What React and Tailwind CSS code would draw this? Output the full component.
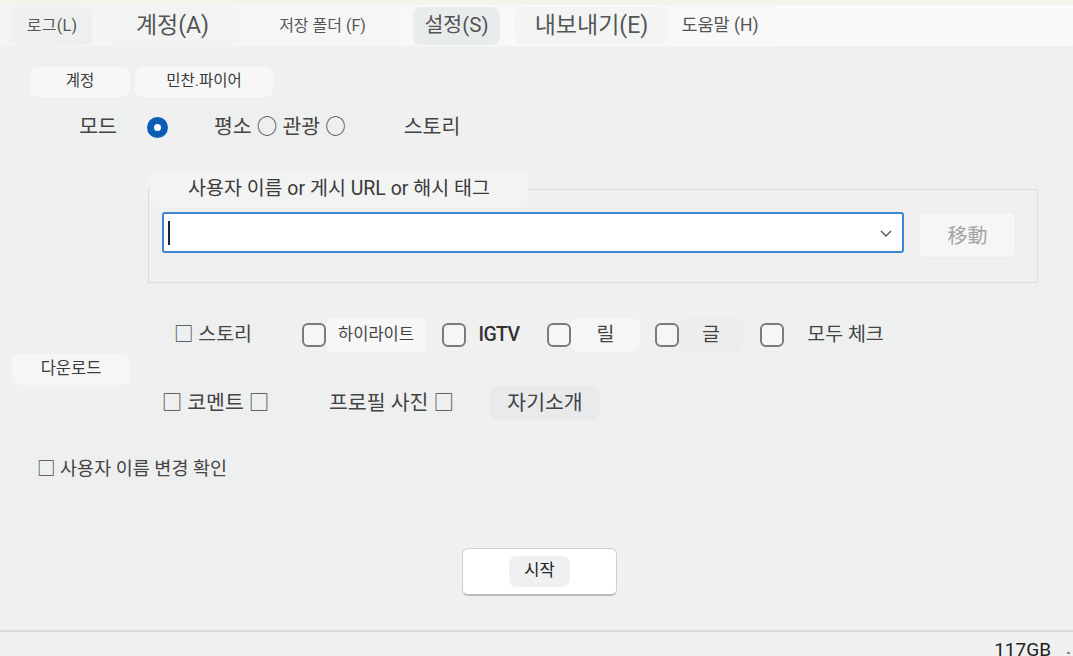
import React from 'react';

const font = { fontFamily: 'Roboto, "Noto Sans CJK KR", sans-serif' };

function Box({ className = '' }) {
  return <span className={`block w-[24px] h-[24px] shrink-0 border-2 border-[#7b7b7b] rounded-[6px] bg-[#f6f6f6] ${className}`} />;
}

export default function App() {
  return (
    <div className="w-[1073px] h-[656px] bg-[#f0f0f0] text-[#444] overflow-hidden flex flex-col" style={font}>
      {/* Menu bar */}
      <div className="h-[46px] shrink-0 bg-gradient-to-r from-[#f3f5f4] via-[#f8f9f8] to-[#fafafa] border-t-[5px] border-[#f4f4ea] flex items-center text-[#555] leading-none">
        <div className="ml-[12px] w-[80px] h-[38px] rounded-lg bg-[#eef0ef] flex items-center justify-center text-[16px] tracking-[0.3px]">로그(L)</div>
        <div className="ml-[13px] w-[135px] h-[38px] rounded-lg bg-[#f2f4f4] flex items-center justify-center text-[23px]">계정(A)</div>
        <div className="ml-[5px] w-[155px] h-[38px] rounded-lg bg-[#f5f7f7] flex items-center justify-center text-[16px]">저장 폴더 (F)</div>
        <div className="ml-[13px] w-[87px] h-[38px] rounded-lg bg-[#e9eced] flex items-center justify-center text-[20.5px]">설정(S)</div>
        <div className="ml-[15px] w-[153px] h-[38px] rounded-lg bg-[#f3f5f5] flex items-center justify-center text-[23px]">내보내기(E)</div>
        <div className="ml-[2px] w-[110px] h-[38px] rounded-lg bg-[#f8f8f8] flex items-center justify-center text-[17.5px] pr-[10px]">도움말 (H)</div>
      </div>

      {/* Account row */}
      <div className="mt-[21px] ml-[30px] flex gap-[5px] text-[15.5px] leading-none text-[#3a3a3a]">
        <div className="w-[100px] h-[30px] rounded-lg bg-[#f7f7f7] flex items-center justify-center">계정</div>
        <div className="w-[138px] h-[30px] rounded-lg bg-[#f7f7f7] flex items-center justify-center">민찬.파이어</div>
      </div>

      {/* Mode row */}
      <div className="mt-[13px] flex items-center h-[35px] text-[20.5px] leading-none">
        <div className="ml-[62px] w-[68px] h-[35px] rounded-lg bg-[#eeefef] flex items-center justify-center pl-[4px]">모드</div>
        <span className="ml-[17px] w-[21px] h-[21px] rounded-full bg-[#0b5cb5] flex items-center justify-center">
          <span className="w-[7px] h-[7px] rounded-full bg-white" />
        </span>
        <div className="ml-[28px] h-[35px] px-[18px] rounded-lg bg-[#eeefef] flex items-center">평소 ○ 관광 ○</div>
        <div className="ml-[40px]">스토리</div>
      </div>

      {/* Input group */}
      <fieldset className="mt-[25px] ml-[148px] w-[890px] border border-[#dcdcdc] pb-[24px] pl-[13px] pr-[21px]">
        <legend className="-ml-[12px] h-[38px] w-[378px] pl-[38px] rounded-lg bg-[#f2f3f3] text-[19.5px] text-[#3a3a3a] leading-none flex items-center">
          사용자 이름 or 게시 URL or 해시 태그
        </legend>
        <div className="mt-[4px] flex items-start gap-[15px]">
          <div className="w-[742px] h-[41px] bg-white border-2 border-[#3d86d4] rounded-[3px] flex items-center justify-between pl-[4px] pr-[8px]">
            <span className="w-[2px] h-[24px] bg-[#222]" />
            <svg width="16" height="16" viewBox="0 0 16 16" fill="none" stroke="#555" strokeWidth="1.4">
              <path d="M3 6l5 5 5-5" />
            </svg>
          </div>
          <button className="w-[97px] h-[46px] rounded-md bg-[#f6f6f6] border border-[#ececec] text-[20px] text-[#a3a3a3] leading-none" style={{ fontFamily: '"Noto Sans CJK SC", sans-serif' }}>
            移動
          </button>
        </div>
      </fieldset>

      {/* Download section */}
      <div className="mt-[35px] flex items-center">
        <div className="ml-[12px] w-[118px] h-[31px] rounded-lg bg-[#f6f6f6] flex items-center justify-center text-[16.5px] leading-none text-[#3a3a3a]">다운로드</div>
        <div className="ml-[7px] flex flex-col gap-[34px] text-[19.5px] leading-none">
          <div className="flex items-center h-[34px]">
            <div className="w-[146px] h-[34px] rounded-lg bg-[#eeefef] flex items-center justify-center pl-[6px]">□ 스토리</div>
            <Box className="ml-[19px]" />
            <div className="w-[100px] h-[34px] rounded-lg bg-[#f7f7f7] flex items-center justify-center text-[16.5px]">하이라이트</div>
            <Box className="ml-[16px]" />
            <div className="w-[66px] h-[34px] flex items-center justify-center text-[#333] tracking-[-0.6px]" style={{ fontWeight: 500 }}>IGTV</div>
            <Box className="ml-[15px]" />
            <div className="w-[69px] h-[34px] rounded-lg bg-[#f5f6f5] flex items-center justify-center">릴</div>
            <Box className="ml-[15px]" />
            <div className="w-[64px] h-[34px] rounded-lg bg-[#eceeee] flex items-center justify-center">글</div>
            <Box className="ml-[17px]" />
            <div className="w-[123px] h-[34px] rounded-lg bg-[#eeefef] flex items-center justify-center">모두 체크</div>
          </div>
          <div className="flex items-center h-[34px] gap-[5px] text-[20.5px]">
            <div className="w-[153px] h-[34px] rounded-lg bg-[#eeefef] flex items-center justify-center pl-[4px]">□ 코멘트 □</div>
            <div className="w-[185px] h-[34px] rounded-lg bg-[#eeefef] flex items-center justify-center pl-[8px]">프로필 사진 □</div>
            <div className="ml-[5px] w-[110px] h-[34px] rounded-lg bg-[#e8eaeb] flex items-center justify-center">자기소개</div>
          </div>
        </div>
      </div>

      {/* Username change */}
      <div className="mt-[32px] w-[255px] h-[35px] rounded-r-lg bg-[#eeefef] flex items-center pl-[37px] text-[18.5px] leading-none">
        □ 사용자 이름 변경 확인
      </div>

      {/* Start */}
      <div className="mt-[61px] flex">
        <button className="ml-[462px] w-[155px] h-[48px] bg-white border border-[#cfcfcf] border-b-2 border-b-[#bdbdbd] rounded-md flex items-center justify-center">
          <span className="w-[61px] h-[31px] rounded-lg bg-[#eef0f1] flex items-center justify-center text-[16.5px] leading-none text-[#222]">시작</span>
        </button>
      </div>

      {/* Status bar */}
      <div className="mt-auto h-[26px] border-t-2 border-[#dadada] flex items-start justify-end pr-[3px]">
        <span className="mt-[8px] text-[19px] leading-none text-[#222]">117GB</span>
        <span className="ml-[16px] mt-[20px] w-[3px] h-[2px] bg-[#888]" />
      </div>
    </div>
  );
}
